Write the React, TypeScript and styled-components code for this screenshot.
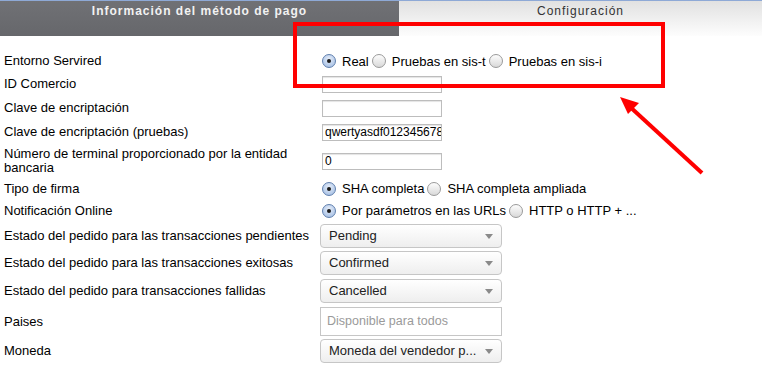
import styled, { createGlobalStyle } from "styled-components";

const Global = createGlobalStyle`
  html, body { margin: 0; padding: 0; background: #fff; }
  body { font-family: "Liberation Sans", Arial, sans-serif; font-size: 13px; color: #000; }
`;

const Page = styled.div`
  position: relative;
  width: 762px;
  height: 369px;
  overflow: hidden;
  border-top: 1px solid #8ea9d6;
  box-sizing: border-box;
`;

const Tabs = styled.div`
  display: grid;
  grid-template-columns: 399px 1fr;
  height: 35px;
`;

const Tab = styled.div<{ $active?: boolean }>`
  display: flex;
  justify-content: center;
  padding-top: 3px;
  box-sizing: border-box;
  font-size: 12px;
  letter-spacing: 1px;
  font-weight: ${(p) => (p.$active ? "bold" : "normal")};
  color: ${(p) => (p.$active ? "#f2f2f2" : "#333")};
  background: ${(p) =>
    p.$active
      ? "linear-gradient(#707175, #66676b)"
      : "linear-gradient(#e1e1e1, #fdfdfd)"};
`;

const Form = styled.div`
  padding: 14px 0 0 4px;
`;

const Row = styled.div<{ $h: number }>`
  display: flex;
  align-items: center;
  height: ${(p) => p.$h}px;
`;

const Label = styled.div`
  width: 318px;
  line-height: 14px;
  flex-shrink: 0;
`;

const Group = styled.div`
  display: flex;
  align-items: center;
`;

const Option = styled.label`
  display: flex;
  align-items: center;
  margin-right: 3px;
  white-space: nowrap;
`;

const Radio = styled.span<{ $on?: boolean }>`
  position: relative;
  width: 12px;
  height: 12px;
  border-radius: 50%;
  margin-right: 6px;
  border: 1px solid ${(p) => (p.$on ? "#5f7fae" : "#9a9a9a")};
  background: ${(p) =>
    p.$on
      ? "radial-gradient(circle at 50% 35%, #e6eefa, #9cb8e0)"
      : "linear-gradient(#fdfdfd, #d9d9d9)"};
  &::after {
    content: "";
    display: ${(p) => (p.$on ? "block" : "none")};
    position: absolute;
    left: 4px;
    top: 4px;
    width: 4px;
    height: 4px;
    border-radius: 50%;
    background: #1b1b1b;
  }
`;

const TextInput = styled.div`
  width: 120px;
  height: 17px;
  box-sizing: border-box;
  border: 1px solid #bdbdbd;
  box-shadow: inset 0 1px 1px #e4e4e4;
  font-size: 12px;
  line-height: 15px;
  padding-left: 2px;
  overflow: hidden;
  white-space: nowrap;
`;

const Select = styled.div`
  position: relative;
  width: 182px;
  height: 24px;
  box-sizing: border-box;
  margin-left: -2px;
  border: 1px solid #c6c6c6;
  border-radius: 4px;
  background: linear-gradient(#ffffff, #eeeeee);
  padding-left: 8px;
  line-height: 22px;
  color: #222;
  &::after {
    content: "";
    position: absolute;
    right: 8px;
    top: 9px;
    border-left: 4px solid transparent;
    border-right: 4px solid transparent;
    border-top: 5px solid #8a8a8a;
  }
`;

const Multi = styled.div`
  width: 182px;
  height: 29px;
  box-sizing: border-box;
  margin-left: -2px;
  border: 1px solid #c6c6c6;
  padding-left: 6px;
  line-height: 27px;
  font-size: 12.5px;
  color: #9a9a9a;
`;

const Highlight = styled.div`
  position: absolute;
  left: 293px;
  top: 21px;
  width: 372px;
  height: 66px;
  box-sizing: border-box;
  border: 4px solid #ff0000;
`;

const Arrow = styled.svg`
  position: absolute;
  left: 610px;
  top: 88px;
`;

const radios = (opts: string[], on: number) => (
  <Group>
    {opts.map((o, i) => (
      <Option key={o}>
        <Radio $on={i === on} />
        {o}
      </Option>
    ))}
  </Group>
);

export default function App() {
  return (
    <Page>
      <Global />
      <Tabs>
        <Tab $active>Información del método de pago</Tab>
        <Tab>Configuración</Tab>
      </Tabs>
      <Form>
        <Row $h={22}>
          <Label>Entorno Servired</Label>
          {radios(["Real", "Pruebas en sis-t", "Pruebas en sis-i"], 0)}
        </Row>
        <Row $h={24}>
          <Label>ID Comercio</Label>
          <TextInput />
        </Row>
        <Row $h={24}>
          <Label>Clave de encriptación</Label>
          <TextInput />
        </Row>
        <Row $h={24}>
          <Label>Clave de encriptación (pruebas)</Label>
          <TextInput>qwertyasdf0123456789</TextInput>
        </Row>
        <Row $h={34}>
          <Label>Número de terminal proporcionado por la entidad bancaria</Label>
          <TextInput>0</TextInput>
        </Row>
        <Row $h={21}>
          <Label>Tipo de firma</Label>
          {radios(["SHA completa", "SHA completa ampliada"], 0)}
        </Row>
        <Row $h={23}>
          <Label>Notificación Online</Label>
          {radios(["Por parámetros en las URLs", "HTTP o HTTP + ..."], 0)}
        </Row>
        <Row $h={27}>
          <Label>Estado del pedido para las transacciones pendientes</Label>
          <Select>Pending</Select>
        </Row>
        <Row $h={28}>
          <Label>Estado del pedido para las transacciones exitosas</Label>
          <Select>Confirmed</Select>
        </Row>
        <Row $h={28}>
          <Label>Estado del pedido para transacciones fallidas</Label>
          <Select>Cancelled</Select>
        </Row>
        <Row $h={33}>
          <Label>Paises</Label>
          <Multi>Disponible para todos</Multi>
        </Row>
        <Row $h={26}>
          <Label>Moneda</Label>
          <Select>Moneda del vendedor p...</Select>
        </Row>
      </Form>
      <Highlight />
      <Arrow width="110" height="95" viewBox="0 0 110 95">
        <line x1="92" y1="84" x2="18" y2="16" stroke="#ff0000" strokeWidth="4" />
        <polygon points="10,8 29,14 18,25" fill="#ff0000" />
      </Arrow>
    </Page>
  );
}
